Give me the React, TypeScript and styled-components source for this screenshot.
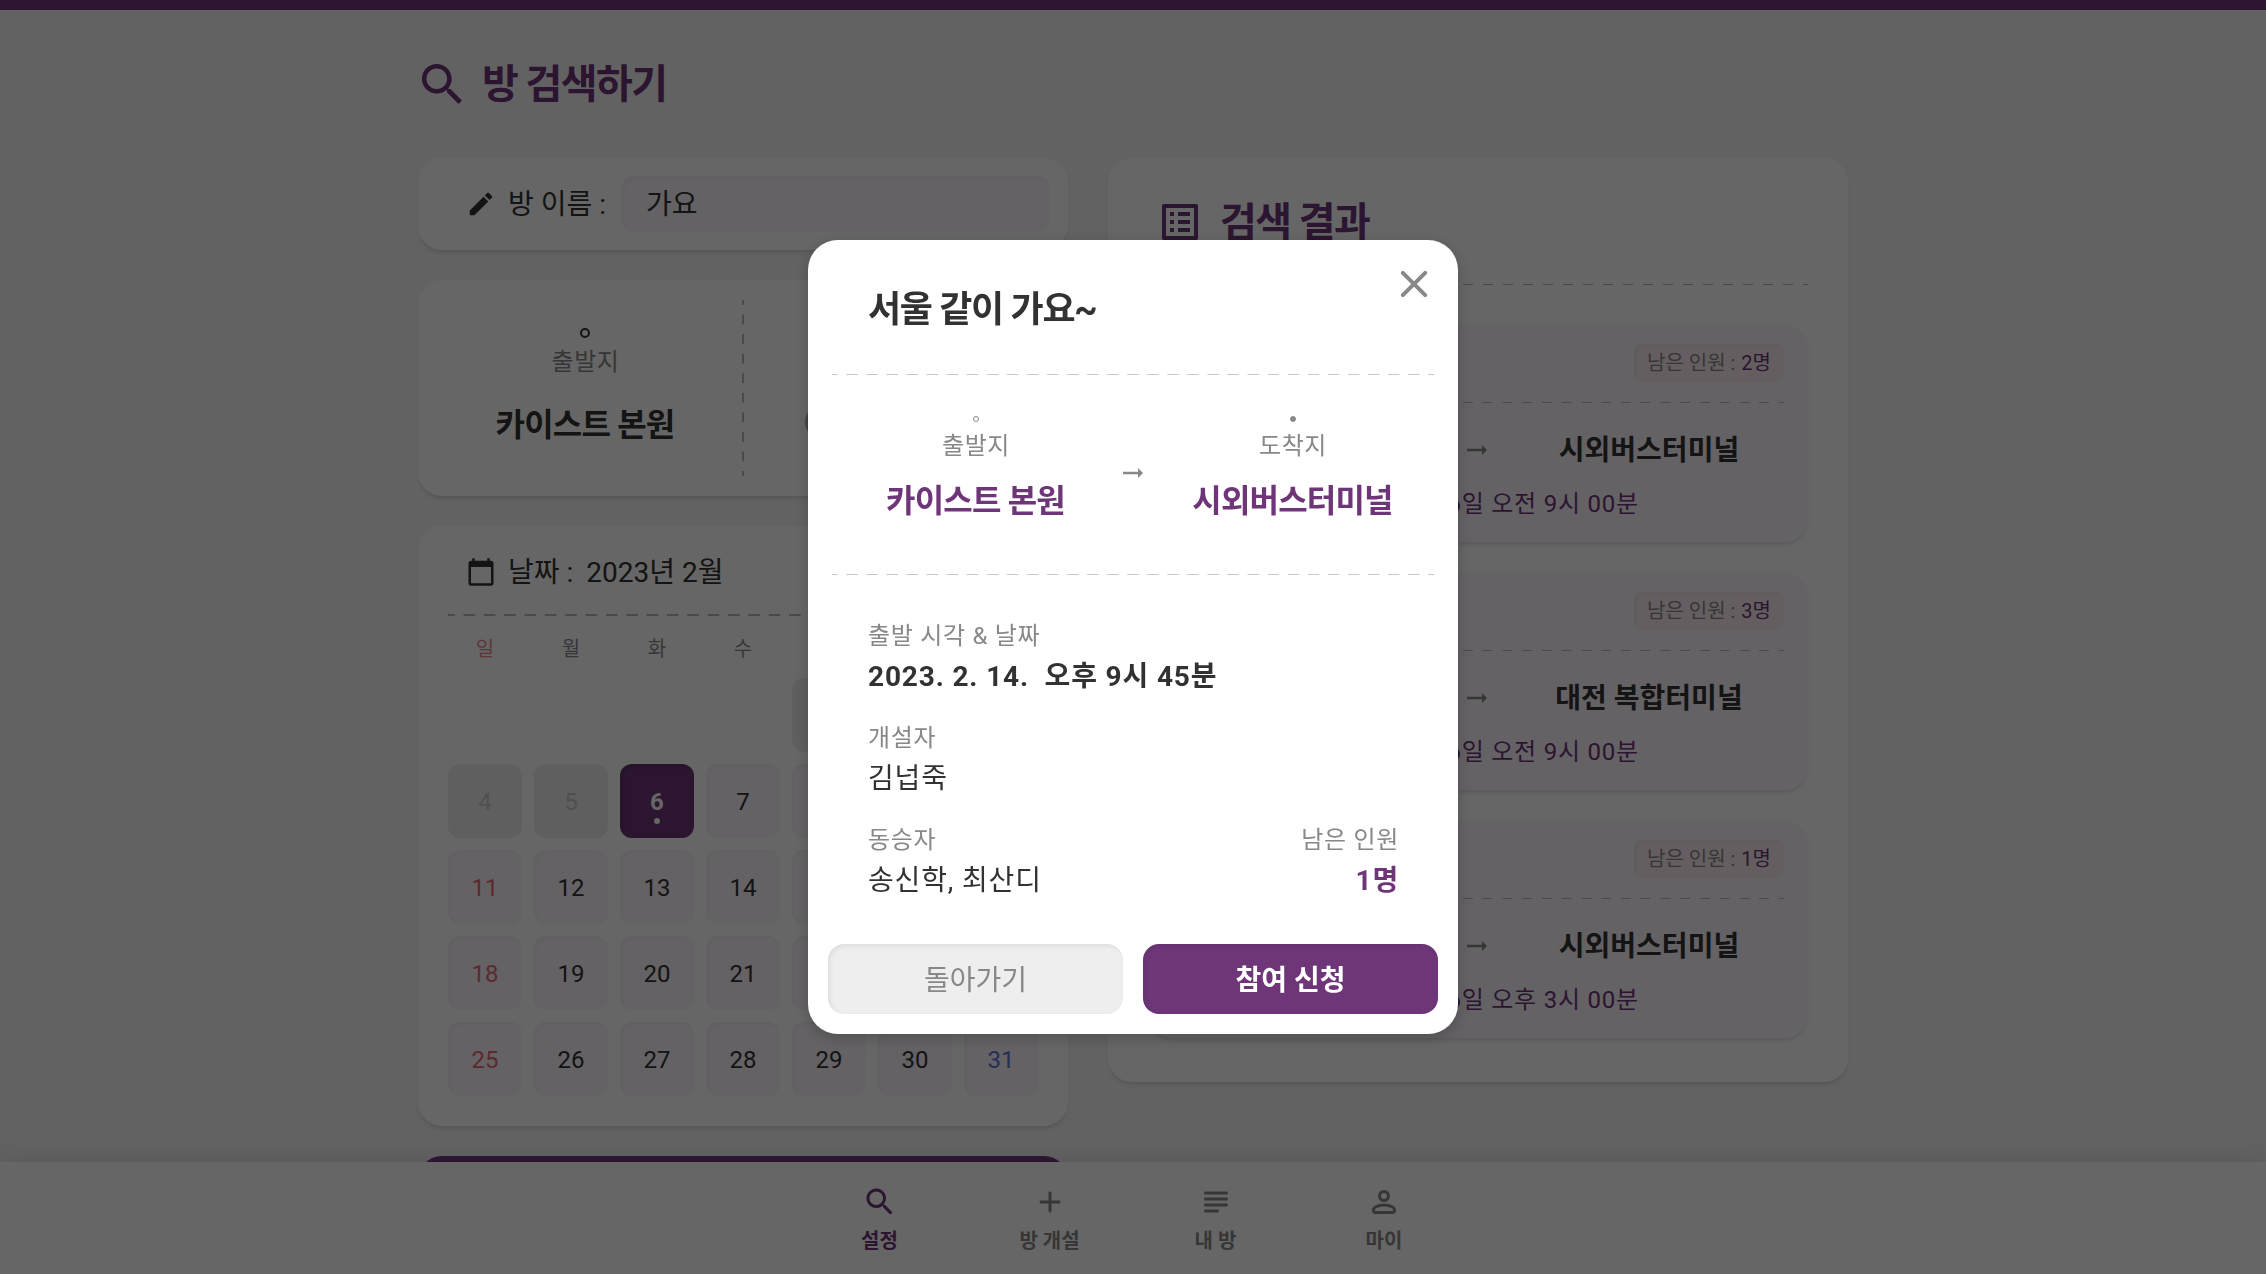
import React from "react";
import styled, { createGlobalStyle, css } from "styled-components";

const color = {
  purple: "#6E3678",
  purpleLight: "#FAF5FA",
  black: "#323232",
  gray: "#888888",
  dash: "#B9B9B9",
  disabledBg: "#EEEEEE",
  disabledText: "#C8C8C8",
  red: "#E66A70",
  blue: "#6070D8",
};

const cardShadow =
  "0 3px 2px -1px rgba(110,54,120,.05), 0 5px 2px -1px rgba(110,54,120,.03), 0 4px 6px -2px rgba(110,54,120,.11)";
const insetShadow = "inset 2px 2px 5px 0 rgba(0,0,0,.035)";

const GlobalStyle = createGlobalStyle`
  * { box-sizing: border-box; }
  body {
    margin: 0;
    background: #F5F5F5;
    color: ${color.black};
    font-family: Roboto, "Noto Sans CJK KR", sans-serif;
    overflow: hidden;
  }
`;

const Screen = styled.div`
  height: 1274px;
  display: flex;
  flex-direction: column;
  overflow: hidden;
`;

const TopBar = styled.div`
  flex: none;
  height: 10px;
  background: ${color.purple};
`;

const Main = styled.main`
  flex: 1;
  min-height: 0;
  width: 1430px;
  margin: 0 auto;
`;

const TitleText = styled.span`
  padding-top: 2px;
`;

const PageTitle = styled.h1`
  display: flex;
  align-items: center;
  gap: 12px;
  height: 148px;
  margin: 0 0 0 -3px;
  color: ${color.purple};
  font-size: 40px;
  font-weight: 700;
  line-height: 56px;
  letter-spacing: -1.6px;
`;

const Columns = styled.div`
  display: grid;
  grid-template-columns: 650px 740px;
  gap: 40px;
  align-items: start;
`;

const LeftColumn = styled.div`
  display: flex;
  flex-direction: column;
  gap: 30px;
`;

const Card = styled.section`
  background: #fff;
  border-radius: 24px;
  box-shadow: ${cardShadow};
`;

const Icon = styled.svg<{ $size: number }>`
  display: block;
  flex: none;
  width: ${(p) => p.$size}px;
  height: ${(p) => p.$size}px;
  fill: currentColor;
`;

const NameCard = styled(Card)`
  height: 92px;
  padding: 18px 18px 18px 48px;
  display: flex;
  align-items: center;
  font-size: 28px;
`;

const FieldLabel = styled.span`
  margin-left: 12px;
  padding-top: 1px;
  line-height: 40px;
  white-space: pre;
`;

const MonthText = styled.span`
  margin-left: 13px;
  padding-top: 1px;
  line-height: 40px;
`;

const NameInput = styled.div`
  width: 428px;
  height: 56px;
  margin-left: auto;
  padding: 0 24px;
  border-radius: 12px;
  background: ${color.purpleLight};
  box-shadow: ${insetShadow};
  line-height: 58px;
`;

const Dash = styled.div<{ $n: number; $w?: number; $vertical?: boolean; $color?: string; $shift?: number }>`
  ${(p) => {
    const w = p.$w ?? 1;
    const c = p.$color ?? color.dash;
    return css`
      ${p.$vertical ? `width: ${w}px; align-self: stretch;` : `height: ${w}px;`}
      flex: none;
      background-image: linear-gradient(
        ${p.$vertical ? "180deg" : "90deg"},
        ${c} 0 27%, transparent 27% 73%, ${c} 73%
      );
      background-size: ${p.$vertical ? `100% calc(100% / ${p.$n})` : `calc(100% / ${p.$n}) 100%`};
      background-position: ${p.$shift ?? 0}px 0;
    `;
  }}
`;

const RouteCard = styled(Card)`
  height: 216px;
  padding: 20px 10px;
  display: flex;
`;

const Place = styled.div`
  flex: 1;
  display: flex;
  flex-direction: column;
  align-items: center;
`;

const PlaceMark = styled.i<{ $size: number; $border: number; $filled?: boolean; $color: string }>`
  width: ${(p) => p.$size}px;
  height: ${(p) => p.$size}px;
  border: ${(p) => p.$border}px solid ${(p) => p.$color};
  border-radius: 50%;
  background: ${(p) => (p.$filled ? p.$color : "transparent")};
`;

const PlaceCaption = styled.span`
  padding-left: 1px;
  color: ${color.gray};
  font-size: 24px;
  line-height: 36px;
  letter-spacing: 0.6px;
`;

const PlaceName = styled.strong<{ $color: string }>`
  color: ${(p) => p.$color};
  font-size: 32px;
  font-weight: 700;
  line-height: 48px;
  letter-spacing: -0.8px;
  white-space: nowrap;
`;

const RoutePlace = styled(Place)`
  padding-top: 28px;
  ${PlaceCaption} { margin-top: 6px; }
  ${PlaceName} { margin-top: 21px; }
`;

const PlacePicker = styled.div`
  display: flex;
  align-items: center;
  gap: 8px;
  width: 192px;
  height: 48px;
  margin-top: 18px;
  color: ${color.gray};
  font-size: 28px;
  white-space: nowrap;
`;

const PickerKnob = styled.i`
  flex: none;
  width: 34px;
  height: 34px;
  border-radius: 50%;
  background: #AAAAAA;
`;

const CalendarCard = styled(Card)`
  height: 600px;
  padding: 0 30px 30px;
`;

const CalendarHead = styled.div`
  height: 88px;
  padding: 4px 0 0 18px;
  display: flex;
  align-items: center;
  font-size: 28px;
`;

const WeekRow = styled.div`
  display: grid;
  grid-template-columns: repeat(7, 74px);
  gap: 12px;
  height: 62px;
  line-height: 67px;
  text-align: center;
  font-size: 20px;
`;

const Weekday = styled.span<{ $color: string }>`
  color: ${(p) => p.$color};
  opacity: ${(p) => (p.$color === color.gray ? 1 : 0.8)};
`;

const Days = styled.div`
  display: grid;
  grid-template-columns: repeat(7, 74px);
  grid-auto-rows: 74px;
  gap: 12px;
`;

type DayKind = "empty" | "past" | "selected" | "open";

const DayCell = styled.div<{ $kind: DayKind; $color: string }>`
  display: flex;
  flex-direction: column;
  align-items: center;
  border-radius: 12px;
  font-size: 24px;
  line-height: 28px;
  padding-top: 24px;
  color: ${(p) => p.$color};
  ${(p) => p.$kind === "past" && css`background: ${color.disabledBg};`}
  ${(p) => p.$kind === "open" && css`background: ${color.purpleLight}; box-shadow: ${insetShadow};`}
  ${(p) =>
    p.$kind === "selected" &&
    css`
      background: ${color.purple};
      box-shadow: inset 2px 2px 5px 0 rgba(0, 0, 0, 0.15);
      font-weight: 700;
    `}
`;

const DayDot = styled.i`
  width: 6px;
  height: 6px;
  margin-top: 2px;
  border-radius: 50%;
  background: #fff;
`;

const SearchButton = styled.button`
  height: 112px;
  border: 0;
  border-radius: 24px;
  background: ${color.purple};
  color: #fff;
  font: 700 32px Roboto, "Noto Sans CJK KR", sans-serif;
`;

const ResultCard = styled(Card)`
  height: 924px;
  padding: 0 40px;
`;

const ResultTitle = styled.h2`
  display: flex;
  align-items: center;
  gap: 16px;
  height: 126px;
  margin: 0;
  padding: 2px 0 0 8px;
  color: ${color.purple};
  font-size: 40px;
  font-weight: 700;
  line-height: 56px;
  letter-spacing: -1.6px;
`;

const ResultList = styled.div`
  display: grid;
  gap: 30px;
  padding-top: 39px;
`;

const ResultItem = styled.article`
  height: 218px;
  border-radius: 24px;
  background: ${color.purpleLight};
  box-shadow: ${cardShadow};
`;

const ResultHead = styled.div`
  height: 78px;
  padding: 20px 24px 0;
  display: flex;
  justify-content: space-between;
  font-size: 28px;
  line-height: 38px;
`;

const SeatTag = styled.span`
  height: 38px;
  width: 150px;
  border-radius: 8px;
  background: #f9ecf1;
  box-shadow: ${insetShadow};
  color: ${color.gray};
  font-size: 20px;
  line-height: 39px;
  text-align: center;
  white-space: nowrap;
  b {
    margin-left: 1px;
    color: ${color.purple};
    font-weight: 400;
  }
`;

const ResultRoute = styled.div`
  display: flex;
  align-items: center;
  height: 64px;
  margin: 15px 2px 0 0;
  svg { color: ${color.gray}; }
`;

const ResultPlace = styled.strong`
  flex: 1;
  padding-top: 2px;
  text-align: center;
  font-size: 28px;
  font-weight: 700;
  line-height: 40px;
`;

const ResultTime = styled.div`
  margin-top: 4px;
  color: ${color.purple};
  font-size: 24px;
  line-height: 36px;
  letter-spacing: 0.75px;
  text-align: center;
`;

const NavBar = styled.nav`
  flex: none;
  height: 112px;
  display: grid;
  grid-template-columns: 170px 170px 162px 175px;
  justify-content: center;
  background: #fff;
  box-shadow: 0 -4px 20px rgba(110, 54, 120, 0.12);
  z-index: 1;
`;

const NavItem = styled.div<{ $active?: boolean }>`
  padding-top: 22px;
  display: flex;
  flex-direction: column;
  align-items: center;
  color: ${(p) => (p.$active ? color.purple : color.gray)};
  font-size: 20px;
  font-weight: 700;
  line-height: 31px;
  gap: 6px;
`;

const Backdrop = styled.div`
  position: fixed;
  inset: 0;
  z-index: 10;
  display: flex;
  align-items: center;
  justify-content: center;
  background: rgba(0, 0, 0, 0.6);
`;

const Modal = styled.div`
  position: relative;
  width: 650px;
  height: 794px;
  display: flex;
  flex-direction: column;
  padding-bottom: 20px;
  border-radius: 30px;
  background: #fff;
  box-shadow: 0 4px 16px rgba(0, 0, 0, 0.2);
`;

const CloseButton = styled.span`
  position: absolute;
  top: 20px;
  right: 20px;
  color: ${color.gray};
`;

const ModalTitle = styled.h2`
  height: 134px;
  margin: 0;
  padding: 46px 60px 0;
  font-size: 36px;
  font-weight: 700;
  line-height: 49px;
  letter-spacing: -1.3px;
`;

const ModalDashes = styled.div`
  padding: 0 24px;
`;

const ModalRoute = styled.div`
  height: 199px;
  display: grid;
  grid-template-columns: 1fr 30px 1fr;
  margin: 0 24px;
  color: ${color.gray};
  svg { margin-top: 83px; }
`;

const ModalPlace = styled(Place)<{ $indent: number }>`
  padding: 41px 0 0 ${(p) => p.$indent}px;
  ${PlaceCaption} { margin-top: 6px; }
  ${PlaceName} { margin-top: 13px; }
`;

const ModalInfo = styled.div`
  flex: 1;
  display: flex;
  flex-direction: column;
  gap: 20px;
  padding: 43px 59px 0 60px;
`;

const InfoRow = styled.div`
  display: flex;
  justify-content: space-between;
`;

const InfoField = styled.div<{ $align?: string }>`
  text-align: ${(p) => p.$align ?? "left"};
`;

const InfoLabel = styled.div`
  color: ${color.gray};
  font-size: 24px;
  line-height: 36px;
  letter-spacing: 0.7px;
`;

const InfoValue = styled.div<{ $bold?: boolean; $color?: string }>`
  color: ${(p) => p.$color ?? color.black};
  font-size: 28px;
  font-weight: ${(p) => (p.$bold ? 700 : 400)};
  line-height: 46px;
  letter-spacing: 0.85px;
  white-space: pre;
`;

const ModalButtons = styled.div`
  display: grid;
  grid-template-columns: 1fr 1fr;
  gap: 20px;
  padding: 0 20px;
`;

const ModalButton = styled.button<{ $primary?: boolean }>`
  height: 70px;
  padding: 3px 0 0;
  border: 0;
  border-radius: 16px;
  background: ${(p) => (p.$primary ? color.purple : "#EEEEEE")};
  color: ${(p) => (p.$primary ? "#fff" : color.gray)};
  box-shadow: inset 2px 2px 5px 0 rgba(0, 0, 0, 0.075);
  font-family: Roboto, "Noto Sans CJK KR", sans-serif;
  font-size: 28px;
  font-weight: ${(p) => (p.$primary ? 700 : 400)};
  line-height: 40px;
`;

const paths = {
  search:
    "M15.5 14h-.79l-.28-.27C15.41 12.59 16 11.11 16 9.5 16 5.91 13.09 3 9.5 3S3 5.91 3 9.5 5.91 16 9.5 16c1.61 0 3.09-.59 4.23-1.57l.27.28v.79l5 4.99L20.49 19l-4.99-5zm-6 0C7.01 14 5 11.99 5 9.5S7.01 5 9.5 5 14 7.01 14 9.5 11.99 14 9.5 14z",
  edit:
    "M3 17.25V21h3.75L17.81 9.94l-3.75-3.75L3 17.25zM20.71 7.04c.39-.39.39-1.02 0-1.41l-2.34-2.34c-.39-.39-1.02-.39-1.41 0l-1.83 1.83 3.75 3.75 1.83-1.83z",
  calendar:
    "M20 3h-1V1h-2v2H7V1H5v2H4c-1.1 0-2 .9-2 2v16c0 1.1.9 2 2 2h16c1.1 0 2-.9 2-2V5c0-1.1-.9-2-2-2zm0 18H4V8h16v13z",
  list:
    "M19 5v14H5V5h14m1.1-2H3.9c-.5 0-.9.4-.9.9v16.2c0 .4.4.9.9.9h16.2c.4 0 .9-.5.9-.9V3.9c0-.5-.5-.9-.9-.9zM11 7h6v2h-6V7zm0 4h6v2h-6v-2zm0 4h6v2h-6zM7 7h2v2H7zm0 4h2v2H7zm0 4h2v2H7z",
  arrow: "M16.01 11H4v2h12.01v3L20 12l-3.99-4v3z",
  close:
    "M18.3 5.71a.996.996 0 0 0-1.41 0L12 10.59 7.11 5.7A.996.996 0 1 0 5.7 7.11L10.59 12 5.7 16.89a.996.996 0 1 0 1.41 1.41L12 13.41l4.89 4.89a.996.996 0 1 0 1.41-1.41L13.41 12l4.89-4.89c.38-.38.38-1.02 0-1.4z",
  searchRound:
    "M15.5 14h-.79l-.28-.27c1.2-1.4 1.82-3.31 1.48-5.34-.47-2.78-2.79-5-5.59-5.34-4.23-.52-7.79 3.04-7.27 7.27.34 2.8 2.56 5.12 5.34 5.59 2.03.34 3.94-.28 5.34-1.48l.27.28v.79l4.25 4.25c.41.41 1.08.41 1.49 0 .41-.41.41-1.08 0-1.49L15.5 14zm-6 0C7.01 14 5 11.99 5 9.5S7.01 5 9.5 5 14 7.01 14 9.5 11.99 14 9.5 14z",
  add:
    "M18 13h-5v5c0 .55-.45 1-1 1s-1-.45-1-1v-5H6c-.55 0-1-.45-1-1s.45-1 1-1h5V6c0-.55.45-1 1-1s1 .45 1 1v5h5c.55 0 1 .45 1 1s-.45 1-1 1z",
  subject:
    "M13 17H5c-.55 0-1 .45-1 1s.45 1 1 1h8c.55 0 1-.45 1-1s-.45-1-1-1zm6-8H5c-.55 0-1 .45-1 1s.45 1 1 1h14c.55 0 1-.45 1-1s-.45-1-1-1zM5 15h14c.55 0 1-.45 1-1s-.45-1-1-1H5c-.55 0-1 .45-1 1s.45 1 1 1zM4 6c0 .55.45 1 1 1h14c.55 0 1-.45 1-1s-.45-1-1-1H5c-.55 0-1 .45-1 1z",
  person:
    "M12 6c1.1 0 2 .9 2 2s-.9 2-2 2-2-.9-2-2 .9-2 2-2m0 9c2.7 0 5.8 1.29 6 2v1H6v-.99c.2-.72 3.3-2.01 6-2.01m0-11C9.79 4 8 5.79 8 8s1.79 4 4 4 4-1.79 4-4-1.79-4-4-4zm0 9c-2.67 0-8 1.34-8 4v1c0 1.1.9 2 2 2h12c1.1 0 2-.9 2-2v-1c0-2.66-5.33-4-8-4z",
};

const Glyph = ({ name, size }: { name: keyof typeof paths; size: number }) => (
  <Icon $size={size} viewBox="0 0 24 24" aria-hidden>
    <path d={paths[name]} />
  </Icon>
);

const weekdays = ["일", "월", "화", "수", "목", "금", "토"];
const dayCells: (number | null)[] = [
  null, null, null, null,
  ...Array.from({ length: 31 }, (_, i) => i + 1),
];

const columnColor = (col: number, base: string) =>
  col === 0 ? color.red : col === 6 ? color.blue : base;

const Calendar = () => (
  <CalendarCard>
    <CalendarHead>
      <Glyph name="calendar" size={30} />
      <FieldLabel>날짜 :</FieldLabel>
      <MonthText>2023년 2월</MonthText>
    </CalendarHead>
    <Dash $n={29} $w={2} $shift={1} />
    <WeekRow>
      {weekdays.map((d, i) => (
        <Weekday key={d} $color={columnColor(i, color.gray)}>{d}</Weekday>
      ))}
    </WeekRow>
    <Days>
      {dayCells.map((d, i) => {
        if (d === null) return <DayCell key={i} $kind="empty" $color="transparent" />;
        const kind: DayKind = d < 6 ? "past" : d === 6 ? "selected" : "open";
        const tone =
          kind === "past" ? color.disabledText : kind === "selected" ? "#fff" : columnColor(i % 7, color.black);
        return (
          <DayCell key={i} $kind={kind} $color={tone}>
            {d}
            {kind === "selected" && <DayDot />}
          </DayCell>
        );
      })}
    </Days>
  </CalendarCard>
);

const results = [
  { name: "같이 가요", to: "시외버스터미널", left: 2, time: "2023년 2월 6일 오전 9시 00분" },
  { name: "함께 가요", to: "대전 복합터미널", left: 3, time: "2023년 2월 6일 오전 9시 00분" },
  { name: "서울 가요", to: "시외버스터미널", left: 1, time: "2023년 2월 6일 오후 3시 00분" },
];

const Results = () => (
  <ResultCard>
    <ResultTitle>
      <Glyph name="list" size={48} />
      <TitleText>검색 결과</TitleText>
    </ResultTitle>
    <Dash $n={33} />
    <ResultList>
      {results.map((r) => (
        <ResultItem key={r.name}>
          <ResultHead>
            <span>{r.name}</span>
            <SeatTag>남은 인원 : <b>{r.left}명</b></SeatTag>
          </ResultHead>
          <ModalDashes>
            <Dash $n={31} />
          </ModalDashes>
          <ResultRoute>
            <ResultPlace>카이스트 본원</ResultPlace>
            <Glyph name="arrow" size={30} />
            <ResultPlace>{r.to}</ResultPlace>
          </ResultRoute>
          <ResultTime>{r.time}</ResultTime>
        </ResultItem>
      ))}
    </ResultList>
  </ResultCard>
);

const RoomModal = () => (
  <Backdrop>
    <Modal role="dialog">
      <CloseButton><Glyph name="close" size={48} /></CloseButton>
      <ModalTitle>서울 같이 가요~</ModalTitle>
      <ModalDashes><Dash $n={30} $color="#C8C8C8" /></ModalDashes>
      <ModalRoute>
        <ModalPlace $indent={1}>
          <PlaceMark $size={6} $border={1} $color={color.gray} />
          <PlaceCaption>출발지</PlaceCaption>
          <PlaceName $color={color.purple}>카이스트 본원</PlaceName>
        </ModalPlace>
        <Glyph name="arrow" size={30} />
        <ModalPlace $indent={3}>
          <PlaceMark $size={6} $border={1} $filled $color={color.gray} />
          <PlaceCaption>도착지</PlaceCaption>
          <PlaceName $color={color.purple}>시외버스터미널</PlaceName>
        </ModalPlace>
      </ModalRoute>
      <ModalDashes><Dash $n={30} $color="#C8C8C8" /></ModalDashes>
      <ModalInfo>
        <InfoField>
          <InfoLabel>출발 시각 &amp; 날짜</InfoLabel>
          <InfoValue $bold>{"2023. 2. 14.  오후 9시 45분"}</InfoValue>
        </InfoField>
        <InfoField>
          <InfoLabel>개설자</InfoLabel>
          <InfoValue>김넙죽</InfoValue>
        </InfoField>
        <InfoRow>
          <InfoField>
            <InfoLabel>동승자</InfoLabel>
            <InfoValue>송신학, 최산디</InfoValue>
          </InfoField>
          <InfoField $align="right">
            <InfoLabel>남은 인원</InfoLabel>
            <InfoValue $bold $color={color.purple}>1명</InfoValue>
          </InfoField>
        </InfoRow>
      </ModalInfo>
      <ModalButtons>
        <ModalButton>돌아가기</ModalButton>
        <ModalButton $primary>참여 신청</ModalButton>
      </ModalButtons>
    </Modal>
  </Backdrop>
);

export default function App() {
  return (
    <>
      <GlobalStyle />
      <Screen>
        <TopBar />
        <Main>
          <PageTitle>
            <Glyph name="search" size={55} />
            <TitleText>방 검색하기</TitleText>
          </PageTitle>
          <Columns>
            <LeftColumn>
              <NameCard>
                <Glyph name="edit" size={30} />
                <FieldLabel>방 이름 :</FieldLabel>
                <NameInput>가요</NameInput>
              </NameCard>
              <RouteCard>
                <RoutePlace>
                  <PlaceMark $size={10} $border={2} $color={color.black} />
                  <PlaceCaption>출발지</PlaceCaption>
                  <PlaceName $color={color.black}>카이스트 본원</PlaceName>
                </RoutePlace>
                <Dash $n={9} $w={2} $vertical />
                <RoutePlace>
                  <PlaceMark $size={10} $border={2} $filled $color={color.black} />
                  <PlaceCaption>도착지</PlaceCaption>
                  <PlacePicker><PickerKnob />도착지 선택</PlacePicker>
                </RoutePlace>
              </RouteCard>
              <Calendar />
              <SearchButton>방 검색하기</SearchButton>
            </LeftColumn>
            <Results />
          </Columns>
        </Main>
        <NavBar>
          <NavItem $active><Glyph name="searchRound" size={36} />설정</NavItem>
          <NavItem><Glyph name="add" size={36} />방 개설</NavItem>
          <NavItem><Glyph name="subject" size={36} />내 방</NavItem>
          <NavItem><Glyph name="person" size={36} />마이</NavItem>
        </NavBar>
      </Screen>
      <RoomModal />
    </>
  );
}
